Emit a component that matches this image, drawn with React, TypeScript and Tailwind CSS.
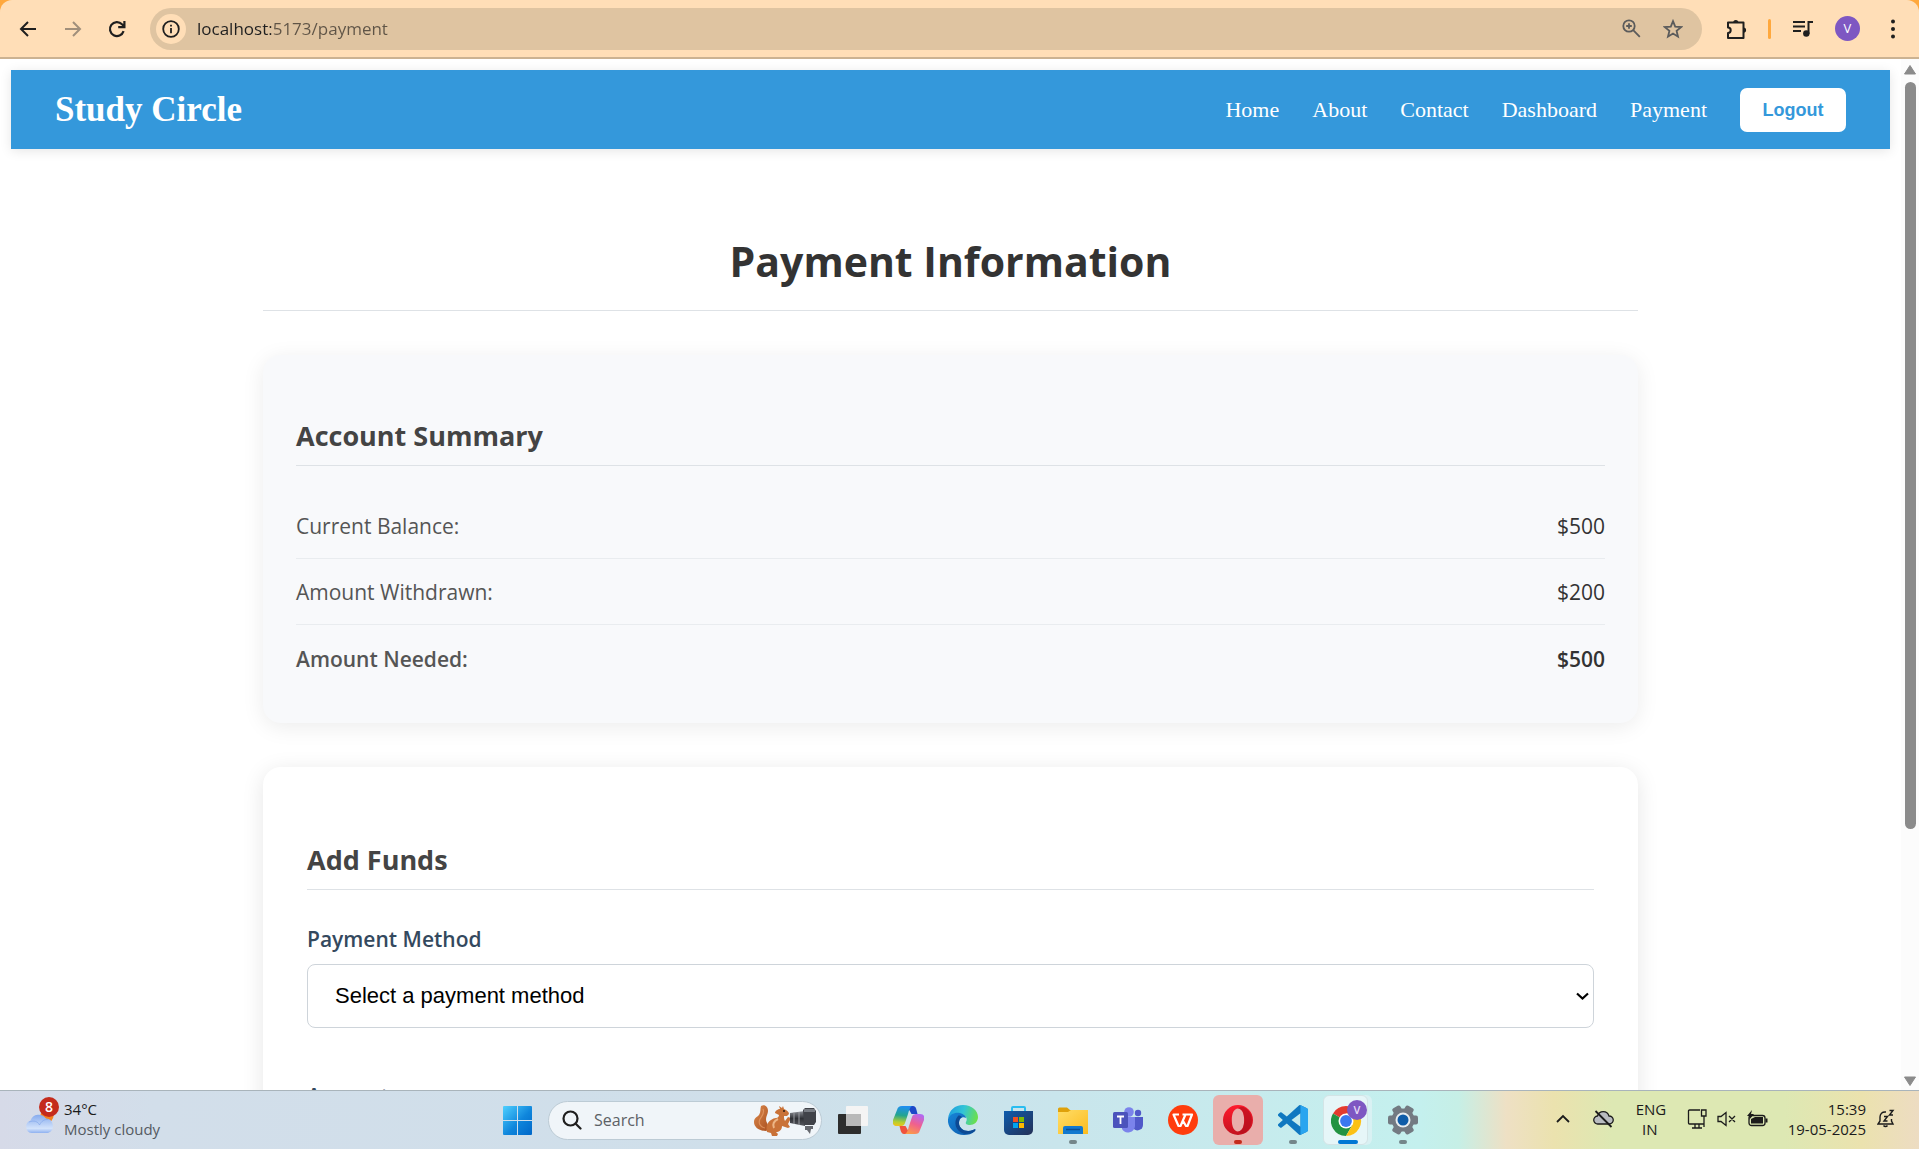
import type { ReactNode } from 'react';

const uiFont = "font-['Open_Sans',sans-serif]";

function IconBack({ dim = false }: { dim?: boolean }) {
  return (
    <svg className="shrink-0" width="18" height="18" viewBox="0 0 18 18" fill="none" stroke={dim ? '#a18f7b' : '#1f1f1f'} strokeWidth="2">
      {dim ? <path d="M1 9h14.500M9 2l7 7-7 7" /> : <path d="M17 9H2.500M9 2L2 9l7 7" />}
    </svg>
  );
}

function BrowserBar() {
  return (
    <div className="shrink-0 bg-[#ffa83d]">
      <div className={`flex h-[59px] items-center rounded-t-xl border-b-2 border-[#cbb292] bg-[#ffdeb7] pl-[19px] ${uiFont}`}>
        <button aria-label="Back" className="flex w-[17px] justify-center"><IconBack /></button>
        <button aria-label="Forward" className="ml-7 flex w-[17px] justify-center"><IconBack dim /></button>
        <button aria-label="Reload" className="mr-[25px] ml-7 flex w-4 justify-center">
          <svg className="shrink-0" width="18" height="18" viewBox="0 0 18 18" fill="none" stroke="#1f1f1f" strokeWidth="2.2">
            <path d="M15.6 11.2A7 7 0 1 1 14 4.2L16 6.2M16.4 1v6.2H10.2" />
          </svg>
        </button>
        <div className="flex h-[42px] flex-1 items-center rounded-full bg-[#dfc4a1] pr-[19px] pl-[6px]">
          <button aria-label="Site information" className="grid size-[30px] place-items-center rounded-full bg-[#ffdeb7]">
            <svg width="18" height="18" viewBox="0 0 18 18" fill="none" stroke="#1f1f1f" strokeWidth="1.8">
              <circle cx="9" cy="9" r="7.8" /><path d="M9 8v5.2M9 4.7v1.8" />
            </svg>
          </button>
          <input
            aria-label="Address"
            defaultValue="localhost:5173/payment"
            className="ml-[11px] h-7 min-w-0 flex-1 bg-[linear-gradient(90deg,#1f1f1f_74px,#5f5446_74px)] bg-clip-text text-[17px] text-transparent outline-none"
          />
          <div className="flex items-center gap-[22px] text-[#5b5b5b]">
            <button aria-label="Zoom">
              <svg width="19" height="19" viewBox="0 0 19 19" fill="none" stroke="currentColor" strokeWidth="1.8">
                <circle cx="7" cy="7" r="5.7" /><path d="M11.2 11.2l6.6 6.6M7 4.2v5.6M4.2 7h5.600" />
              </svg>
            </button>
            <button aria-label="Bookmark">
              <svg width="20" height="20" viewBox="0 0 20 20" fill="none" stroke="currentColor" strokeWidth="1.8">
                <path d="M10 2.2l2.2 5.5 5.9.4-4.5 3.8 1.4 5.8-5-3.1-5 3.1 1.4-5.8L1.9 8.1l5.9-.4z" />
              </svg>
            </button>
          </div>
        </div>
        <div className="flex items-center pr-[23px] pl-6">
          <button aria-label="Extensions">
            <svg width="22" height="22" viewBox="0 0 22 22" fill="none" stroke="#1f1f1f" strokeWidth="2">
              <path d="M2 4.500h15.500v15.500h-15.500v-5a2.700 2.700 0 0 0 0-5.400z" strokeLinejoin="round" />
              <path d="M7.200 4.500a2.600 2.600 0 0 1 5.200 0zM17.500 9.500a2.600 2.600 0 0 1 0 5.200z" fill="#1f1f1f" stroke="none" />
            </svg>
          </button>
          <div className="ml-5 h-5 w-[3px] rounded-full bg-[#ffa83d]" />
          <button aria-label="Media controls" className="ml-[22px]">
            <svg width="20" height="18" viewBox="0 0 20 18" fill="none" stroke="#1f1f1f" strokeWidth="2">
              <path d="M0 2h12M0 6.500h12M0 11h8M15.500 14V2H20" /><circle cx="13.300" cy="13.500" r="3.200" fill="#1f1f1f" stroke="none" />
            </svg>
          </button>
          <button aria-label="Profile" className="ml-[22px] grid size-[25px] place-items-center rounded-full bg-[#7e57c2] text-[13px] text-white">V</button>
          <button aria-label="Menu" className="ml-[30px]">
            <svg width="6" height="20" viewBox="0 0 6 20" fill="#1f1f1f"><circle cx="3" cy="2.500" r="2" /><circle cx="3" cy="10" r="2" /><circle cx="3" cy="17.500" r="2" /></svg>
          </button>
        </div>
      </div>
    </div>
  );
}

const links = ['Home', 'About', 'Contact', 'Dashboard', 'Payment'];

function SiteHeader() {
  return (
    <header className="flex items-center justify-between bg-[#3498db] px-11 pt-[18px] pb-[17px] font-['Liberation_Serif',serif] text-white shadow-[0_2px_11px_rgba(0,0,0,0.1)]">
      <div className="text-[35px] leading-10 font-bold">Study Circle</div>
      <nav className="flex items-center gap-[33px] text-[22px] leading-7">
        {links.map((l) => <a key={l} href={'#' + l.toLowerCase()}>{l}</a>)}
        <button className="h-11 w-[106px] rounded-[7px] bg-white font-['Liberation_Sans',sans-serif] text-[18px] font-bold text-[#3498db]">Logout</button>
      </nav>
    </header>
  );
}

const rows = [
  { label: 'Current Balance:', value: '$500', strong: false },
  { label: 'Amount Withdrawn:', value: '$200', strong: false },
  { label: 'Amount Needed:', value: '$500', strong: true },
];

function SectionTitle({ children }: { children: ReactNode }) {
  return <h2 className="border-b border-[#dee2e6] pb-[10px] text-[27px] leading-[38px] font-bold text-[#444]">{children}</h2>;
}

function PaymentPage() {
  return (
    <main className={`mx-auto w-full max-w-[1375px] pt-[82px] ${uiFont}`}>
      <h1 className="border-b border-[#dee2e6] pb-[19px] text-center text-[41px] leading-[60px] font-bold text-[#333]">Payment Information</h1>
      <section className="mt-11 rounded-[18px] bg-[#f8f9fb] px-[33px] pt-[62px] pb-[31px] shadow-[0_4px_22px_rgba(0,0,0,0.08)]">
        <SectionTitle>Account Summary</SectionTitle>
        <dl className="mt-[27px] text-[21px] leading-[33px]">
          {rows.map((r) => (
            <div key={r.label} className={r.strong ? 'flex justify-between pt-[18px] pb-4 font-semibold' : 'flex justify-between border-b border-[#e9ecef] pt-[17px] pb-[15px]'}>
              <dt className="text-[#555]">{r.label}</dt>
              <dd className="text-[#333]">{r.value}</dd>
            </div>
          ))}
        </dl>
      </section>
      <section className="mt-11 rounded-[18px] bg-white px-11 pt-[74px] pb-11 shadow-[0_4px_22px_rgba(0,0,0,0.1)]">
        <SectionTitle>Add Funds</SectionTitle>
        <form className="text-[21px] leading-[30px] font-semibold text-[#34495e]">
          <label htmlFor="method" className="mt-[34px] block">Payment Method</label>
          <div className="relative mt-[10px]">
            <select id="method" className="block h-16 w-full appearance-none rounded-lg border border-[#ced4da] bg-white px-[27px] font-['Liberation_Sans',sans-serif] text-[22px] font-normal text-black">
              <option>Select a payment method</option>
            </select>
            <svg className="pointer-events-none absolute top-7 right-[5px]" width="13" height="9" viewBox="0 0 13 9" fill="none" stroke="#000" strokeWidth="2.200"><path d="M1 1.500l5.500 5 5.500-5" /></svg>
          </div>
          <label htmlFor="amount" className="mt-[53px] block">Amount</label>
          <input id="amount" className="mt-[10px] block h-16 w-full rounded-lg border border-[#ced4da] px-[27px] font-normal" />
        </form>
      </section>
    </main>
  );
}

function ScrollBar() {
  return (
    <div aria-hidden="true" className="flex w-[18px] shrink-0 flex-col items-center bg-[#fcfcfc] pt-[5px] pb-[3px]">
      <svg width="14" height="11" viewBox="0 0 14 11"><path d="M7 1.500L12.500 10h-11z" fill="#8b8b8b" stroke="#8b8b8b" strokeLinejoin="round" /></svg>
      <div className="mt-[7px] flex w-[11px] flex-1 flex-col">
        <div className="h-[75.2%] rounded-full bg-[#8b8b8b]" />
      </div>
      <svg width="14" height="11" viewBox="0 0 14 11"><path d="M7 9.500L1.500 1h11z" fill="#8b8b8b" stroke="#8b8b8b" strokeLinejoin="round" /></svg>
    </div>
  );
}

function CloudSun() {
  return (
    <svg className="mb-2" width="35" height="37" viewBox="0 0 35 37">
      <defs><linearGradient id="cl" x1="0" y1="0" x2="0" y2="1"><stop stopColor="#86abee" /><stop offset=".75" stopColor="#d3e3fb" /><stop offset="1" stopColor="#8fb1f0" /></linearGradient></defs>
      <circle cx="23" cy="19" r="6.500" fill="#f58220" />
      <path d="M7.500 36a6.500 6.500 0 0 1-1-12.500A8.800 8.800 0 0 1 22 21.500a7.500 7.500 0 0 1 2 14.500z" fill="url(#cl)" />
      <path d="M5 25c5-2 9-.5 10.500 3 2-4 5-6 9-5.500" fill="none" stroke="#7fa4ea" strokeWidth="1" opacity=".6" />
      <circle cx="25" cy="10" r="10" fill="#c42b1c" />
      <text x="25" y="15" textAnchor="middle" fontSize="14" fontFamily="Open Sans" fontWeight="600" fill="#fff">8</text>
    </svg>
  );
}

function WindowsLogo() {
  return (
    <svg width="29" height="29" viewBox="0 0 29 29">
      <defs><linearGradient id="win" x1="0" y1="0" x2="1" y2="1"><stop stopColor="#4fd0ff" /><stop offset=".55" stopColor="#0f86dc" /><stop offset="1" stopColor="#0067c8" /></linearGradient></defs>
      <path d="M1 0h13v14H0V1a1 1 0 0 1 1-1zM15 0h13a1 1 0 0 1 1 1v13H15zM0 15h14v14H1a1 1 0 0 1-1-1zM15 15h14v13a1 1 0 0 1-1 1H15z" fill="url(#win)" />
    </svg>
  );
}

function SquirrelArt() {
  return (
    <svg className="shrink-0" width="62" height="32" viewBox="0 0 62 32">
      <defs>
        <linearGradient id="sq" x1="0" y1="0" x2="1" y2="1"><stop stopColor="#dd8a4e" /><stop offset="1" stopColor="#a9501f" /></linearGradient>
        <linearGradient id="lens" x1="0" y1="0" x2="0" y2="1"><stop stopColor="#8b8e95" /><stop offset=".5" stopColor="#2f3136" /><stop offset="1" stopColor="#55585e" /></linearGradient>
      </defs>
      <path d="M7 2c4-2 7 1 7 5 0 3-2 5-2 8 0 4 3 6 3 10l-3 2C5 27 0 23 0 18c0-4 3-5 5-7 2-3 1-6 2-9z" fill="url(#sq)" />
      <path d="M9 5c2 4-1 7-3 10-2 4 0 8 5 9" fill="none" stroke="#e8a06b" strokeWidth="1.200" opacity=".7" />
      <path d="M13 28c-2-7 2-13 9-14 2 0 3-2 3-3l-4-2c0-2 3-4 5-4l-1-3 3 2 1-2 1 3c3 1 5 3 5 5l-2 2h-3c0 2 0 3 1 5l3-4 3 1-3 6 2 3-2 1-6-2c0 4-3 6-6 6l2 2-1 2h-5l-1-3z" fill="#c97238" />
      <path d="M24 15c-4 2-6 5-4 9" fill="none" stroke="#ecb585" strokeWidth="2" />
      <circle cx="30" cy="7" r="1" fill="#2b1a10" />
      <path d="M36 9l15-2v15l-15-3z" fill="url(#lens)" />
      <path d="M40 8.500v11.500M45 8v13" stroke="#9a9da3" strokeWidth="1" />
      <path d="M49 6l2-2h9l2 3v11l-2 3H50z" fill="#414349" />
      <path d="M50 5h11v3H50z" fill="#777b82" /><path d="M51 22h8v3h-2l-1 5-3-4h-2z" fill="#65686e" />
    </svg>
  );
}

function TaskView() {
  return (
    <svg width="30" height="28" viewBox="0 0 30 28">
      <rect x="0" y="8" width="23" height="20" rx="1" fill="#2d2d2d" />
      <rect x="8" y="0" width="22" height="20" rx="1" fill="#f4f4f4" />
      <path d="M8 8h15v12H8z" fill="#b9b9b9" />
    </svg>
  );
}

function Copilot() {
  return (
    <svg width="31" height="28" viewBox="0 0 31 28">
      <defs>
        <linearGradient id="cp1" x1=".3" y1="0" x2=".2" y2="1"><stop stopColor="#1f8ff0" /><stop offset=".45" stopColor="#23a58f" /><stop offset=".8" stopColor="#b8cf2e" /><stop offset="1" stopColor="#f2c21a" /></linearGradient>
        <linearGradient id="cp2" x1=".7" y1="0" x2=".3" y2="1"><stop stopColor="#b269f2" /><stop offset=".5" stopColor="#f0608e" /><stop offset="1" stopColor="#fb9a4b" /></linearGradient>
      </defs>
      <path d="M14 0h6c2 0 3 2 3.500 4l1 4h-6z" fill="#1c48c8" />
      <path d="M17 28h-6c-2 0-3-2-3.500-4l-1-4h6z" fill="#f0533d" />
      <path d="M9 0h10c-2 1-3 4-4 8l-3 9c-1 3-3 3-5 3H4c-4 0-5-3-4-6L4 4c1-3 2-4 5-4z" fill="url(#cp1)" />
      <path d="M22 28H12c2-1 3-4 4-8l3-9c1-3 3-3 5-3h3c4 0 5 3 4 6l-4 10c-1 3-2 4-5 4z" fill="url(#cp2)" />
    </svg>
  );
}

function Edge() {
  return (
    <svg width="30" height="30" viewBox="0 0 30 30">
      <defs>
        <linearGradient id="ed1" x1="0" y1=".3" x2="1" y2=".5"><stop stopColor="#1e9de0" /><stop offset=".5" stopColor="#33c5d6" /><stop offset="1" stopColor="#6be04a" /></linearGradient>
        <linearGradient id="ed2" x1="0" y1="0" x2="1" y2="1"><stop stopColor="#1785d8" /><stop offset="1" stopColor="#0b57a8" /></linearGradient>
      </defs>
      <path d="M0 14C1 5 7 0 15 0c9 0 15 6 15 12 0 5-4 8-8 8-3 0-5-1-4-3 2-3 0-7-5-8C7 8 2 10 0 14z" fill="url(#ed1)" />
      <path d="M0 14c2-5 7-7 12-6 4 1 6 3 6 5-3-2-7 0-7 5 0 6 7 10 14 7 2-1 3-1 2 1-3 3-7 4-11 4C6 30-1 22 0 14z" fill="url(#ed2)" />
      <path d="M10 11c-5 5-3 16 7 18 4 0 8-1 10-3 1-2 0-2-2-1-7 3-14-1-14-7 0-3 1-5 3-6-1-1-3-2-4-1z" fill="#0d4a94" />
    </svg>
  );
}

function Store() {
  return (
    <svg width="29" height="29" viewBox="0 0 29 29">
      <defs><linearGradient id="st" x1="0" y1="0" x2="1" y2="1"><stop stopColor="#0e5cad" /><stop offset="1" stopColor="#243056" /></linearGradient></defs>
      <path d="M8 6V2a1 1 0 0 1 1-1h11a1 1 0 0 1 1 1v4" fill="none" stroke="#29bdf0" strokeWidth="2" />
      <path d="M0 5h29v19a5 5 0 0 1-5 5H5a5 5 0 0 1-5-5z" fill="url(#st)" />
      <path d="M9 11h5v5H9z" fill="#f25022" /><path d="M15 11h5v5h-5z" fill="#7fba00" /><path d="M9 17h5v5H9z" fill="#00a4ef" /><path d="M15 17h5v5h-5z" fill="#ffb900" />
    </svg>
  );
}

function Folder() {
  return (
    <svg width="30" height="27" viewBox="0 0 30 27">
      <defs><linearGradient id="fo" x1="0" y1="0" x2="1" y2="1"><stop stopColor="#ffdd68" /><stop offset="1" stopColor="#fcbc1e" /></linearGradient></defs>
      <path d="M0 2a1.500 1.500 0 0 1 1.500-1.500H9L12 3h18v6H0z" fill="#dfa10b" />
      <path d="M0 5h10l3-2h17v24H0z" fill="url(#fo)" />
      <path d="M5 27v-6a2 2 0 0 1 2-2h16a2 2 0 0 1 2 2v6z" fill="#1279cf" /><path d="M8 22.500h14" stroke="#0a4f94" strokeWidth="1.500" />
    </svg>
  );
}

function Teams() {
  return (
    <svg width="30" height="27" viewBox="0 0 30 27">
      <circle cx="16" cy="5" r="4.800" fill="#7b83eb" /><circle cx="25" cy="6" r="3.200" fill="#5059c9" />
      <path d="M20 10h10v8a5.500 5.500 0 0 1-10 3z" fill="#5059c9" /><path d="M9 10h13v9a7 7 0 0 1-13 3z" fill="#7b83eb" />
      <rect y="5" width="15" height="16" rx="1.500" fill="#4b53bc" /><path d="M4 9.500h7M7.500 9.500V17" stroke="#fff" strokeWidth="1.800" />
    </svg>
  );
}

function Wps() {
  return (
    <svg width="30" height="30" viewBox="0 0 30 30">
      <circle cx="15" cy="15" r="15" fill="#ff3d0d" />
      <path d="M11 9.500H5.500L10.500 21h2l5-11.500h-3M14.500 15l3.500 6h1.500L24 9.500h-6.500" fill="none" stroke="#fff" strokeWidth="2.200" strokeLinejoin="round" />
    </svg>
  );
}

function Opera() {
  return (
    <svg width="30" height="30" viewBox="0 0 30 30">
      <defs><linearGradient id="op" x1="0" y1="0" x2="0" y2="1"><stop stopColor="#ff1b2d" /><stop offset="1" stopColor="#c4121f" /></linearGradient></defs>
      <path fillRule="evenodd" d="M15 0a15 15 0 1 0 0 30 15 15 0 0 0 0-30zM15 3.500c4 0 6.200 5 6.200 11.500S19 26.500 15 26.500 8.800 21.500 8.800 15 11 3.500 15 3.500z" fill="url(#op)" />
      <path d="M15 3.500c3-3 6-2 9 .500a15 15 0 0 1 0 22c-3 2.500-6 3.500-9 .500 4 0 6.200-5 6.200-11.500S19 3.500 15 3.500z" fill="#b10f1c" opacity=".6" />
    </svg>
  );
}

function VsCode() {
  return (
    <svg width="30" height="30" viewBox="0 0 24 24">
      <path d="M23.15 2.587L18.21.21a1.494 1.494 0 0 0-1.705.29l-9.46 8.63-4.12-3.128a.999.999 0 0 0-1.276.057L.327 7.261A1 1 0 0 0 .326 8.74L3.899 12 .326 15.26a1 1 0 0 0 .001 1.479L1.65 17.94a.999.999 0 0 0 1.276.057l4.12-3.128 9.46 8.63a1.492 1.492 0 0 0 1.704.29l4.942-2.377A1.5 1.5 0 0 0 24 20.06V3.939a1.5 1.5 0 0 0-.85-1.352zm-5.146 14.861L10.826 12l7.178-5.448v10.896z" fill="#0f78c0" />
      <path d="M18 .2l5.150 2.387A1.500 1.500 0 0 1 24 3.939V20.060a1.500 1.500 0 0 1-.850 1.350L18 23.800z" fill="#2aa5ef" />
    </svg>
  );
}

function Chrome() {
  return (
    <svg width="36" height="36" viewBox="0 0 36 36">
      <circle cx="15" cy="21" r="15" fill="#fff" />
      <path d="M15 21L2 13.500a15 15 0 0 1 26 0H15z" fill="#e33b2e" />
      <path d="M15 21L2 13.500A15 15 0 0 0 15 36l6.500-11.300z" fill="#229342" />
      <path d="M21.500 24.700L15 36a15 15 0 0 0 13-22.500H15z" fill="#fbc116" />
      <circle cx="15" cy="21" r="7.500" fill="#fff" /><circle cx="15" cy="21" r="5.900" fill="#3b78f0" />
      <circle cx="26" cy="10" r="10" fill="#7e57c2" />
      <text x="26" y="14" fontSize="11" textAnchor="middle" fontFamily="Open Sans" fontWeight="600" fill="#e5dbf5">V</text>
    </svg>
  );
}

function Gear() {
  return (
    <svg width="30" height="30" viewBox="0 0 30 30">
      <g fill="#737a82">
        <circle cx="15" cy="15" r="11.500" />
        <rect x="0" y="10.500" width="30" height="9" rx="2" />
        <rect x="0" y="10.500" width="30" height="9" rx="2" transform="rotate(60 15 15)" />
        <rect x="0" y="10.500" width="30" height="9" rx="2" transform="rotate(120 15 15)" />
      </g>
      <circle cx="15" cy="15" r="7.500" fill="#e8edf0" /><circle cx="15" cy="15" r="5.500" fill="#0f5ca8" />
    </svg>
  );
}

type TaskApp = { name: string; icon: ReactNode; mark?: 'idle' | 'alert' | 'active' };
const apps: TaskApp[] = [
  { name: 'Task view', icon: <TaskView /> },
  { name: 'Copilot', icon: <Copilot /> },
  { name: 'Edge', icon: <Edge /> },
  { name: 'Microsoft Store', icon: <Store /> },
  { name: 'File Explorer', icon: <Folder />, mark: 'idle' },
  { name: 'Teams', icon: <Teams /> },
  { name: 'WPS Office', icon: <Wps /> },
  { name: 'Opera', icon: <Opera />, mark: 'alert' },
  { name: 'Visual Studio Code', icon: <VsCode />, mark: 'idle' },
  { name: 'Chrome', icon: <Chrome />, mark: 'active' },
  { name: 'Settings', icon: <Gear />, mark: 'idle' },
];

const marks = {
  idle: 'absolute bottom-[1px] h-1 w-2 rounded-full bg-[#74868a]',
  alert: 'absolute bottom-[1px] h-1 w-2 rounded-full bg-[#c42b1c]',
  active: 'absolute bottom-0 left-[14px] h-1 w-5 rounded-full bg-[#0078d4]',
};
const tiles = {
  none: 'relative grid size-[50px] place-items-center rounded-md',
  idle: 'relative grid size-[50px] place-items-center rounded-md',
  alert: 'relative grid size-[50px] place-items-center rounded-md bg-[#e9aeab]',
  active: 'relative grid h-[50px] w-[45px] place-items-center rounded-md border border-[#d3e4e6] bg-[#e6f6f8] pb-1 pl-[7px] shadow-[4px_0_0_#d9f1f3] mr-[5px]',
};

function Taskbar() {
  return (
    <footer className={`grid h-[59px] shrink-0 grid-cols-[1fr_auto_1fr] items-center border-t border-[#a9b4bb] bg-[linear-gradient(90deg,#d6dae8_0%,#d2deea_8%,#cfdfea_40%,#c9e5ec_55%,#c4f0ee_74%,#c6efe6_76%,#eee0c4_78.500%,#ebe2ae_81%,#dde8b3_84%,#dde8b3_93%,#ebe2ae_97%,#eddcc2_100%)] text-[15px] leading-5 text-[#1b1b1b] ${uiFont}`}>
      <button className="flex items-center justify-self-start pb-[2px] pl-6 text-left">
        <CloudSun />
        <span className="ml-[5px]"><span className="block">34°C</span><span className="block text-[#555b62]">Mostly cloudy</span></span>
      </button>
      <div className="flex items-center pl-3">
        <button aria-label="Start"><WindowsLogo /></button>
        <div className="mr-[6px] ml-4 flex h-[39px] w-[274px] items-center rounded-full border border-[#bccbd5] bg-[#f0f5f9] pr-[5px] pl-[13px]">
          <svg className="shrink-0" width="20" height="20" viewBox="0 0 20 20" fill="none" stroke="#1f1f1f" strokeWidth="2.200"><circle cx="8.500" cy="8.500" r="7" /><path d="M13.500 13.500l5 5" strokeLinecap="round" /></svg>
          <input aria-label="Search" placeholder="Search" className="ml-3 h-6 min-w-0 flex-1 bg-transparent text-base outline-none placeholder:text-[#5c6166]" />
          <SquirrelArt />
        </div>
        <div className="flex gap-[5px]">
          {apps.map((a) => (
            <button key={a.name} aria-label={a.name} className={tiles[a.mark ?? 'none']}>
              {a.icon}
              {a.mark && <span className={marks[a.mark]} />}
            </button>
          ))}
        </div>
      </div>
      <div className="flex items-center justify-self-end pr-6 pb-[2px]">
        <button aria-label="Show hidden icons">
          <svg width="14" height="10" viewBox="0 0 14 10" fill="none" stroke="#1b1b1b" strokeWidth="1.800"><path d="M1 8l6-6 6 6" /></svg>
        </button>
        <button aria-label="OneDrive" className="ml-[23px]">
          <svg width="21" height="18" viewBox="0 0 21 18" fill="none" stroke="#1b1b1b" strokeWidth="1.300">
            <path d="M5 14a4 4 0 0 1-.500-8A6 6 0 0 1 16 6a4 4 0 0 1 .500 8z" fill="#b9bcc0" /><path d="M2.500 1l16 16" strokeWidth="1.800" />
          </svg>
        </button>
        <button className="ml-[22px] w-7 text-center">ENG<br />IN</button>
        <button aria-label="Network, volume and battery" className="ml-[23px] flex items-center gap-[10px]">
          <svg width="20" height="20" viewBox="0 0 20 20" fill="none" stroke="#1b1b1b" strokeWidth="1.300"><path d="M13 1H2.500a1 1 0 0 0-1 1v12a1 1 0 0 0 1 1H17V8M5 19h10M8 15v4M12 15v4M14.500 1h4.500v6h-4.500zM17 7v11" /></svg>
          <svg width="20" height="16" viewBox="0 0 20 16" fill="none" stroke="#1b1b1b" strokeWidth="1.300"><path d="M1 5.500h3L9 1.500v13L4 10.500H1zM12 5l6 6M18 5l-6 6" /></svg>
          <svg width="21" height="18" viewBox="0 0 21 18"><rect x="2" y="5.500" width="16" height="10" rx="2.500" fill="none" stroke="#1b1b1b" strokeWidth="1.300" /><path d="M4 13.500V9l4-2h8v6.500zM18.500 8.500h2v4h-2zM5 0L0 6h3L2 10l5-6H4z" fill="#1b1b1b" /></svg>
        </button>
        <button className="ml-5 text-right">15:39<br />19-05-2025</button>
        <button aria-label="Notifications" className="ml-[11px]">
          <svg width="18" height="20" viewBox="0 0 18 20" fill="none" stroke="#1b1b1b" strokeWidth="1.400"><path d="M9 3C5 2.500 3 5 3 8v4l-2 3h15l-1.500-3v-2M6.500 16.500a2.500 2.500 0 0 0 4 0M7 7.500h3.500L7 12h3.500M12.500 1.500H16L12.500 6H16" /></svg>
        </button>
      </div>
    </footer>
  );
}

export default function App() {
  return (
    <div className="flex h-screen flex-col overflow-hidden bg-white">
      <BrowserBar />
      <div className="flex min-h-0 flex-1">
        <div className="min-w-0 flex-1 overflow-hidden p-[11px]">
          <SiteHeader />
          <PaymentPage />
        </div>
        <ScrollBar />
      </div>
      <Taskbar />
    </div>
  );
}
